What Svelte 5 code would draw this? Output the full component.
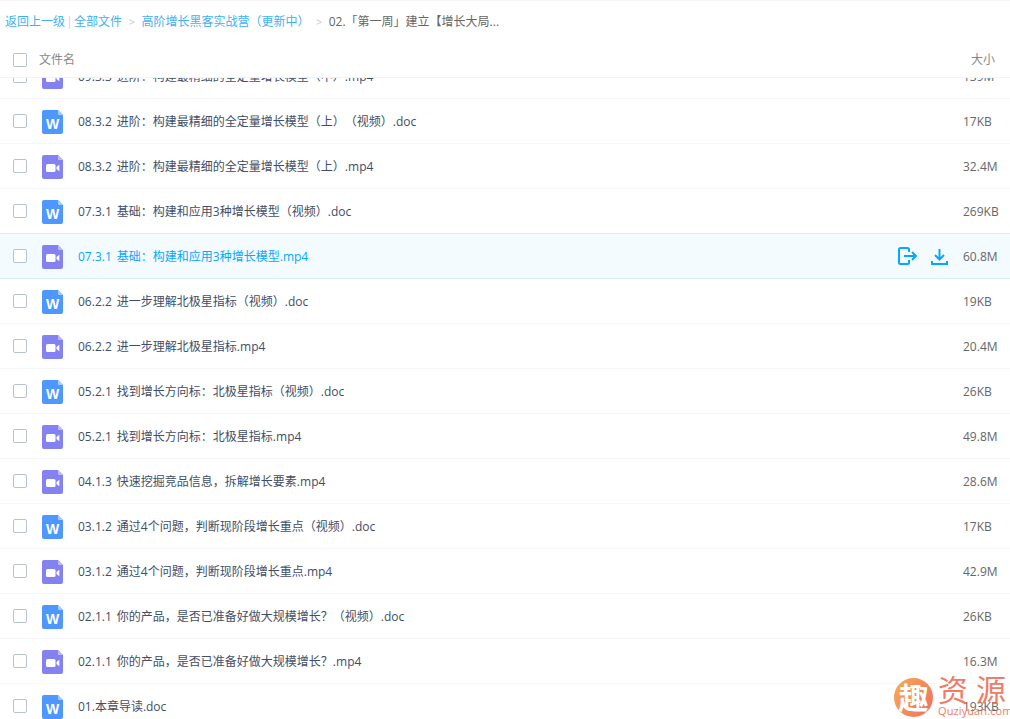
<script lang="ts">
  const files = [
    { name: "09.3.3 进阶：构建最精细的全定量增长模型（中）.mp4", size: "139M", type: "video" },
    { name: "08.3.2 进阶：构建最精细的全定量增长模型（上）（视频）.doc", size: "17KB", type: "doc" },
    { name: "08.3.2 进阶：构建最精细的全定量增长模型（上）.mp4", size: "32.4M", type: "video" },
    { name: "07.3.1 基础：构建和应用3种增长模型（视频）.doc", size: "269KB", type: "doc" },
    { name: "07.3.1 基础：构建和应用3种增长模型.mp4", size: "60.8M", type: "video", active: true },
    { name: "06.2.2 进一步理解北极星指标（视频）.doc", size: "19KB", type: "doc" },
    { name: "06.2.2 进一步理解北极星指标.mp4", size: "20.4M", type: "video" },
    { name: "05.2.1 找到增长方向标：北极星指标（视频）.doc", size: "26KB", type: "doc" },
    { name: "05.2.1 找到增长方向标：北极星指标.mp4", size: "49.8M", type: "video" },
    { name: "04.1.3 快速挖掘竞品信息，拆解增长要素.mp4", size: "28.6M", type: "video" },
    { name: "03.1.2 通过4个问题，判断现阶段增长重点（视频）.doc", size: "17KB", type: "doc" },
    { name: "03.1.2 通过4个问题，判断现阶段增长重点.mp4", size: "42.9M", type: "video" },
    { name: "02.1.1 你的产品，是否已准备好做大规模增长？（视频）.doc", size: "26KB", type: "doc" },
    { name: "02.1.1 你的产品，是否已准备好做大规模增长？.mp4", size: "16.3M", type: "video" },
    { name: "01.本章导读.doc", size: "193KB", type: "doc" }
  ];
</script>

<div class="page">
  <nav class="crumbs">
    <a href="#back">返回上一级</a>
    <span class="bar">|</span>
    <a href="#all">全部文件</a>
    <span class="gt">&gt;</span>
    <a href="#course">高阶增长黑客实战营（更新中）</a>
    <span class="gt">&gt;</span>
    <span class="current">02.「第一周」建立【增长大局...</span>
  </nav>

  <div class="head">
    <span class="check"></span>
    <span class="head-name">文件名</span>
    <span class="head-size">大小</span>
  </div>

  <div class="scroller">
    <ul class="list">
      {#each files as file}
        <li class="row" class:active={file.active}>
          <span class="check"></span>
          <svg class="file-icon" width="21" height="24" viewBox="0 0 21 24">
            {#if file.type === "doc"}
              <path d="M2 0h14l5 5v17a2 2 0 0 1-2 2H2a2 2 0 0 1-2-2V2a2 2 0 0 1 2-2z" fill="#4d97ff" />
              <path d="M16 0l5 5h-4a1 1 0 0 1-1-1z" fill="#a6cbff" />
              <text x="10.5" y="19" class="w">W</text>
            {:else}
              <path d="M2 0h14l5 5v17a2 2 0 0 1-2 2H2a2 2 0 0 1-2-2V2a2 2 0 0 1 2-2z" fill="#8482f0" />
              <path d="M16 0l5 5h-4a1 1 0 0 1-1-1z" fill="#bcbbf8" />
              <rect x="4" y="9" width="9.5" height="8" rx="1.5" fill="#fff" />
              <path d="M14.5 12l2.800-2.200v6.400L14.500 14z" fill="#fff" />
            {/if}
          </svg>
          <span class="name">{file.name}</span>
          {#if file.active}
            <span class="actions">
              <svg width="20" height="18" viewBox="0 0 20 18" fill="none" stroke="#06a7ff" stroke-width="2">
                <path d="M11 5V2.500A1.500 1.500 0 0 0 9.500 1H2.500A1.500 1.500 0 0 0 1 2.500v13A1.500 1.500 0 0 0 2.500 17h7a1.500 1.500 0 0 0 1.500-1.500V13" />
                <path d="M6 9h12M14 5l4 4-4 4" />
              </svg>
              <svg width="17" height="17" viewBox="0 0 17 17" fill="none" stroke="#06a7ff" stroke-width="2">
                <path d="M8.500 1v10M4 7l4.500 4.500L13 7" />
                <path d="M1 13v3h15v-3" />
              </svg>
            </span>
          {/if}
          <span class="size">{file.size}</span>
        </li>
      {/each}
    </ul>
  </div>

  <div class="mark">
    <span class="mark-logo">趣</span>
    <span class="mark-text">
      <span class="mark-title">资源</span>
      <span class="mark-url">Quziyuan.com</span>
    </span>
  </div>
</div>

<style>
  :global(body) {
    margin: 0;
    background: #fff;
    font-family: "Open Sans", "Noto Sans CJK SC", sans-serif;
    font-size: 12px;
    text-spacing-trim: space-all;
  }

  .page {
    position: relative;
    height: 719px;
    overflow: hidden;
    display: flex;
    flex-direction: column;
    border-top: 1px solid #f5f5f6;
    box-sizing: border-box;
  }

  .crumbs {
    height: 40px;
    display: flex;
    align-items: center;
    padding-left: 5px;
    color: #666;
    white-space: nowrap;
  }

  .crumbs a {
    color: #3fb0f5;
    text-decoration: none;
  }

  .bar {
    margin: 0 1.5px 0 1px;
    color: #b5d9f2;
  }

  .gt {
    margin: 0 6.5px;
    color: #c4cad3;
    font-size: 11px;
  }

  .current {
    color: #666;
  }

  .head {
    height: 37px;
    box-sizing: border-box;
    display: flex;
    align-items: center;
    padding-left: 13px;
    border-bottom: 1px solid #f1f2f4;
    flex: none;
    color: #888;
  }

  .head .check {
    margin-top: 2px;
  }

  .head-name {
    margin-left: 12px;
  }

  .head-size {
    margin-left: auto;
    margin-right: 15px;
  }

  .check {
    width: 14px;
    height: 14px;
    box-sizing: border-box;
    border: 1px solid #b7c3d3;
    border-radius: 2px;
    background: #fff;
    flex: none;
  }

  .scroller {
    flex: 1;
    overflow: hidden;
  }

  .list {
    list-style: none;
    margin: -24px 0 0;
    padding: 0;
  }

  .row {
    height: 45px;
    box-sizing: border-box;
    display: flex;
    align-items: center;
    padding-left: 13px;
    border-bottom: 1px solid #f4f6fb;
    color: #424e67;
  }

  .row.active {
    background: #f4fbff;
    border-bottom-color: #d5eeff;
    box-shadow: 0 -1px 0 #d5eeff;
    color: #06a7ff;
  }

  .file-icon {
    margin: 2px 0 0 15px;
    flex: none;
  }

  .w {
    fill: #fff;
    font-family: "Liberation Sans", sans-serif;
    font-size: 14px;
    font-weight: 700;
    text-anchor: middle;
  }

  .name {
    margin-left: 15px;
    flex: 1;
    white-space: nowrap;
    word-spacing: 2px;
  }

  .actions {
    display: flex;
    align-items: center;
    gap: 13px;
    margin-right: 15px;
  }

  .size {
    width: 47px;
    flex: none;
    color: #666;
  }

  .mark {
    position: absolute;
    left: 894px;
    top: 677px;
    display: flex;
    gap: 5px;
    width: 116px;
    white-space: nowrap;
    opacity: 0.88;
  }

  .mark-logo {
    width: 39px;
    height: 39px;
    flex: none;
    border-radius: 50%;
    background: linear-gradient(120deg, #f7a23c, #ec5b4c);
    color: #fff;
    font-size: 30px;
    font-weight: 700;
    line-height: 39px;
    text-align: center;
  }

  .mark-text {
    display: flex;
    flex-direction: column;
    color: #ee6a50;
  }

  .mark-title {
    font-size: 30px;
    line-height: 27px;
    margin-top: -2px;
    margin-bottom: 2px;
    letter-spacing: 8px;
  }

  .mark-url {
    font-size: 11px;
    line-height: 12px;
    letter-spacing: 0.1px;
  }
</style>
